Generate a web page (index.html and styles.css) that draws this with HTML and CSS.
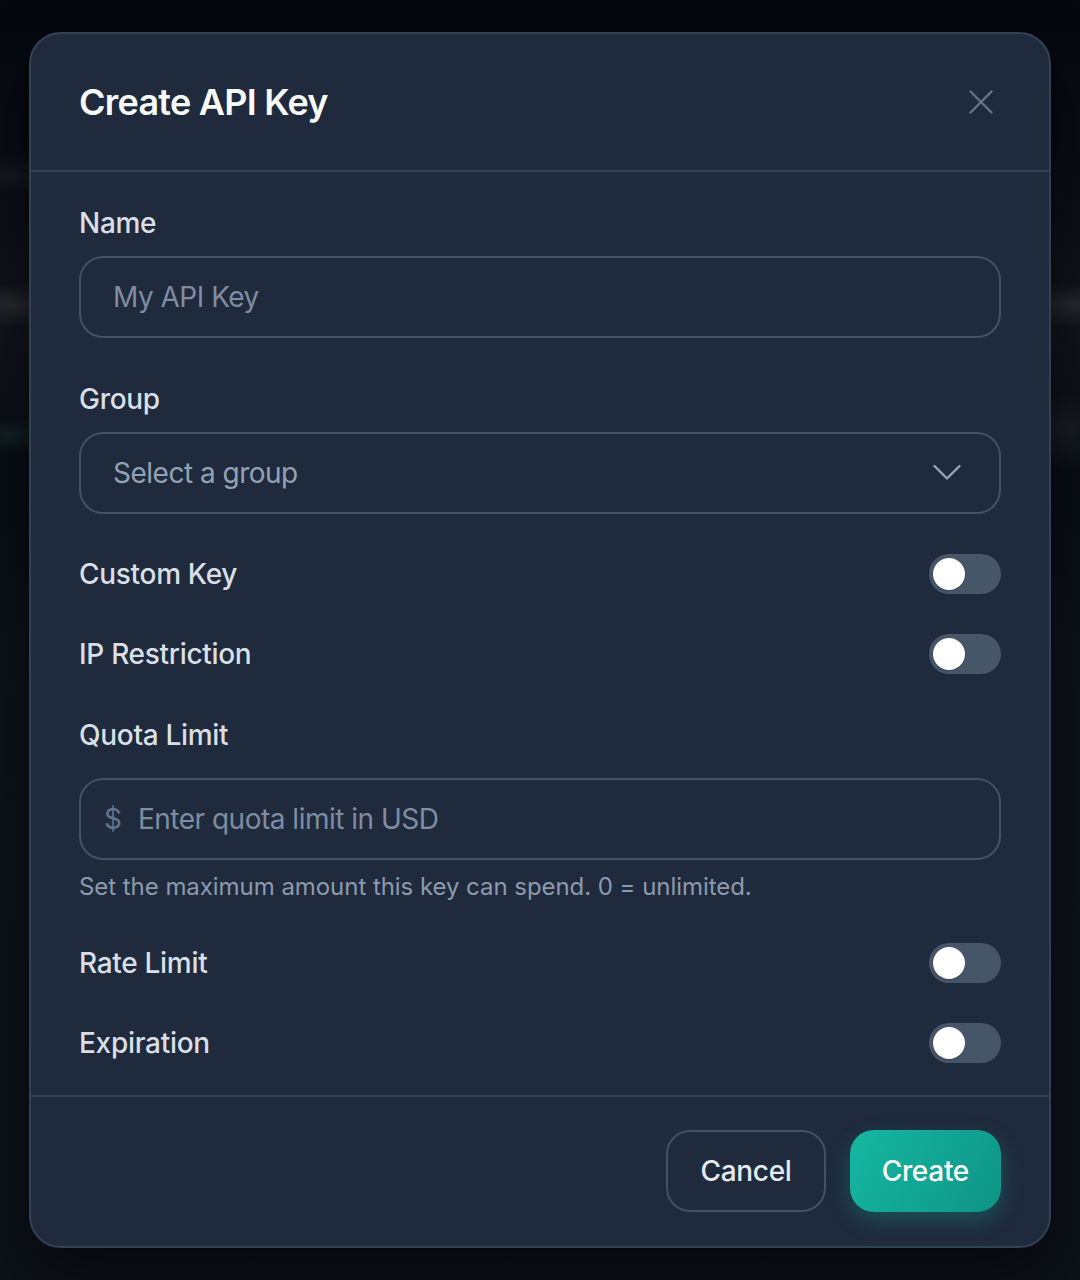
FILE: index.html
```html
<!DOCTYPE html>
<html lang="en">
<head>
<meta charset="utf-8">
<title>Create API Key</title>
<link rel="stylesheet" href="styles.css">
</head>
<body>
<div class="backdrop">
  <div class="modal">
    <div class="modal-header">
      <h2 class="modal-title">Create API Key</h2>
      <button class="close-btn" aria-label="Close">
        <svg width="24" height="24" viewBox="0 0 24 24" fill="none" stroke="#64748b" stroke-width="2.4" stroke-linecap="round"><line x1="1.5" y1="1.5" x2="22.5" y2="22.5"/><line x1="22.5" y1="1.5" x2="1.5" y2="22.5"/></svg>
      </button>
    </div>
    <div class="modal-body">
      <div class="field">
        <label class="label">Name</label>
        <input class="text-input" type="text" placeholder="My API Key">
      </div>
      <div class="field">
        <label class="label">Group</label>
        <div class="select">
          <span class="select-placeholder">Select a group</span>
          <svg width="30" height="18" viewBox="0 0 30 18" fill="none" stroke="#94a3b8" stroke-width="2.4" stroke-linecap="round" stroke-linejoin="round"><polyline points="2.5,2 15,14.5 27.5,2"/></svg>
        </div>
      </div>
      <div class="toggle-row">
        <span class="label">Custom Key</span>
        <span class="toggle"><span class="knob"></span></span>
      </div>
      <div class="toggle-row">
        <span class="label">IP Restriction</span>
        <span class="toggle"><span class="knob"></span></span>
      </div>
      <div class="field">
        <label class="label label-wide">Quota Limit</label>
        <div class="prefix-input">
          <span class="prefix">$</span>
          <input class="bare-input" type="text" placeholder="Enter quota limit in USD">
        </div>
        <p class="help">Set the maximum amount this key can spend. 0 = unlimited.</p>
      </div>
      <div class="toggle-row">
        <span class="label">Rate Limit</span>
        <span class="toggle"><span class="knob"></span></span>
      </div>
      <div class="toggle-row">
        <span class="label">Expiration</span>
        <span class="toggle"><span class="knob"></span></span>
      </div>
    </div>
    <div class="modal-footer">
      <button class="btn btn-secondary">Cancel</button>
      <button class="btn btn-primary">Create</button>
    </div>
  </div>
</div>
</body>
</html>
```

FILE: styles.css
```css
* { box-sizing: border-box; }

html, body {
  margin: 0;
  padding: 0;
}

body {
  width: 1080px;
  height: 1280px;
  overflow: hidden;
  font-family: "Inter", "Noto Sans", "Liberation Sans", sans-serif;
  background-color: #0a0e16;
  background-image:
    radial-gradient(ellipse 60px 22px at 10px 305px, rgba(120,120,120,0.22), transparent),
    radial-gradient(ellipse 60px 22px at 1075px 305px, rgba(120,120,120,0.22), transparent),
    radial-gradient(ellipse 40px 20px at 10px 175px, rgba(100,100,100,0.14), transparent),
    radial-gradient(ellipse 40px 18px at 10px 435px, rgba(40,120,100,0.18), transparent),
    radial-gradient(ellipse 40px 40px at 1068px 430px, rgba(110,110,120,0.14), transparent),
    linear-gradient(180deg, #05080e 0px, #080b12 140px, #11141a 320px, #090d15 480px, #0e121a 700px, #0d1119 1280px);
}

.backdrop {
  padding: 32px 29px 0;
}

.modal {
  width: 1022px;
  background: #1f2a3c;
  border: 2px solid #334155;
  border-radius: 32px;
  box-shadow: 0 30px 60px rgba(0,0,0,0.5);
  overflow: hidden;
}

.modal-header {
  display: flex;
  align-items: center;
  justify-content: space-between;
  padding: 44px 48px 44px 48px;
  border-bottom: 2px solid #334155;
}

.modal-title {
  margin: 0;
  font-size: 36px;
  line-height: 48px;
  font-weight: 600;
  color: #f8fafc;
  letter-spacing: -0.75px;
}

.close-btn {
  background: none;
  border: none;
  padding: 0 8px 0 0;
  margin: 0;
  display: flex;
  cursor: pointer;
}

.modal-body {
  padding: 30px 48px 32px;
  display: flex;
  flex-direction: column;
  gap: 40px;
}

.field {
  display: flex;
  flex-direction: column;
}

.label {
  font-size: 28px;
  line-height: 42px;
  font-weight: 500;
  color: #d9dfe7;
  margin-bottom: 12px;
  letter-spacing: -0.3px;
}

.label-wide {
  margin-bottom: 22px;
}

.text-input,
.select,
.prefix-input {
  height: 82px;
  border: 2px solid #435166;
  border-radius: 24px;
  background: transparent;
  font-family: inherit;
  font-size: 28px;
}

.text-input {
  width: 100%;
  padding: 0 32px;
  color: #e2e8f0;
  outline: none;
  letter-spacing: -0.5px;
}

.text-input::placeholder,
.bare-input::placeholder {
  color: #7f8ca1;
  opacity: 1;
}

.select {
  display: flex;
  align-items: center;
  justify-content: space-between;
  padding: 0 37px 0 32px;
}

.select-placeholder {
  color: #94a1b4;
  font-size: 28px;
  letter-spacing: -0.5px;
}

.toggle-row {
  display: flex;
  align-items: center;
  justify-content: space-between;
  height: 40px;
}

.toggle-row .label {
  margin-bottom: 0;
  line-height: 40px;
}

.toggle {
  width: 72px;
  height: 40px;
  border-radius: 20px;
  background: #475569;
  display: flex;
  align-items: center;
  padding: 0 4px;
}

.knob {
  width: 32px;
  height: 32px;
  border-radius: 50%;
  background: #ffffff;
  box-shadow: 0 1px 2px rgba(0,0,0,0.2);
}

.prefix-input {
  display: flex;
  align-items: center;
  padding: 0 23px;
  gap: 16px;
}

.prefix {
  color: #64748b;
  font-size: 28px;
}

.bare-input {
  flex: 1;
  border: none;
  background: transparent;
  outline: none;
  font-family: inherit;
  font-size: 28px;
  color: #e2e8f0;
  padding: 0;
  letter-spacing: -0.5px;
}

.help {
  margin: 11px 0 0;
  font-size: 24px;
  line-height: 32px;
  color: #8d9aae;
  letter-spacing: -0.05px;
}

.modal-footer {
  display: flex;
  justify-content: flex-end;
  gap: 24px;
  padding: 33px 48px 34px;
  border-top: 2px solid #334155;
}

.btn {
  height: 82px;
  padding: 0 32px;
  border-radius: 24px;
  font-family: inherit;
  font-size: 28px;
  font-weight: 500;
  letter-spacing: -0.3px;
  cursor: pointer;
}

.btn-secondary {
  background: transparent;
  border: 2px solid #435166;
  color: #e5e9ef;
}

.btn-primary {
  border: none;
  color: #ffffff;
  background: linear-gradient(120deg, #15b8a2, #0e9486);
  box-shadow: 0 8px 22px rgba(20, 184, 166, 0.28);
}
```
